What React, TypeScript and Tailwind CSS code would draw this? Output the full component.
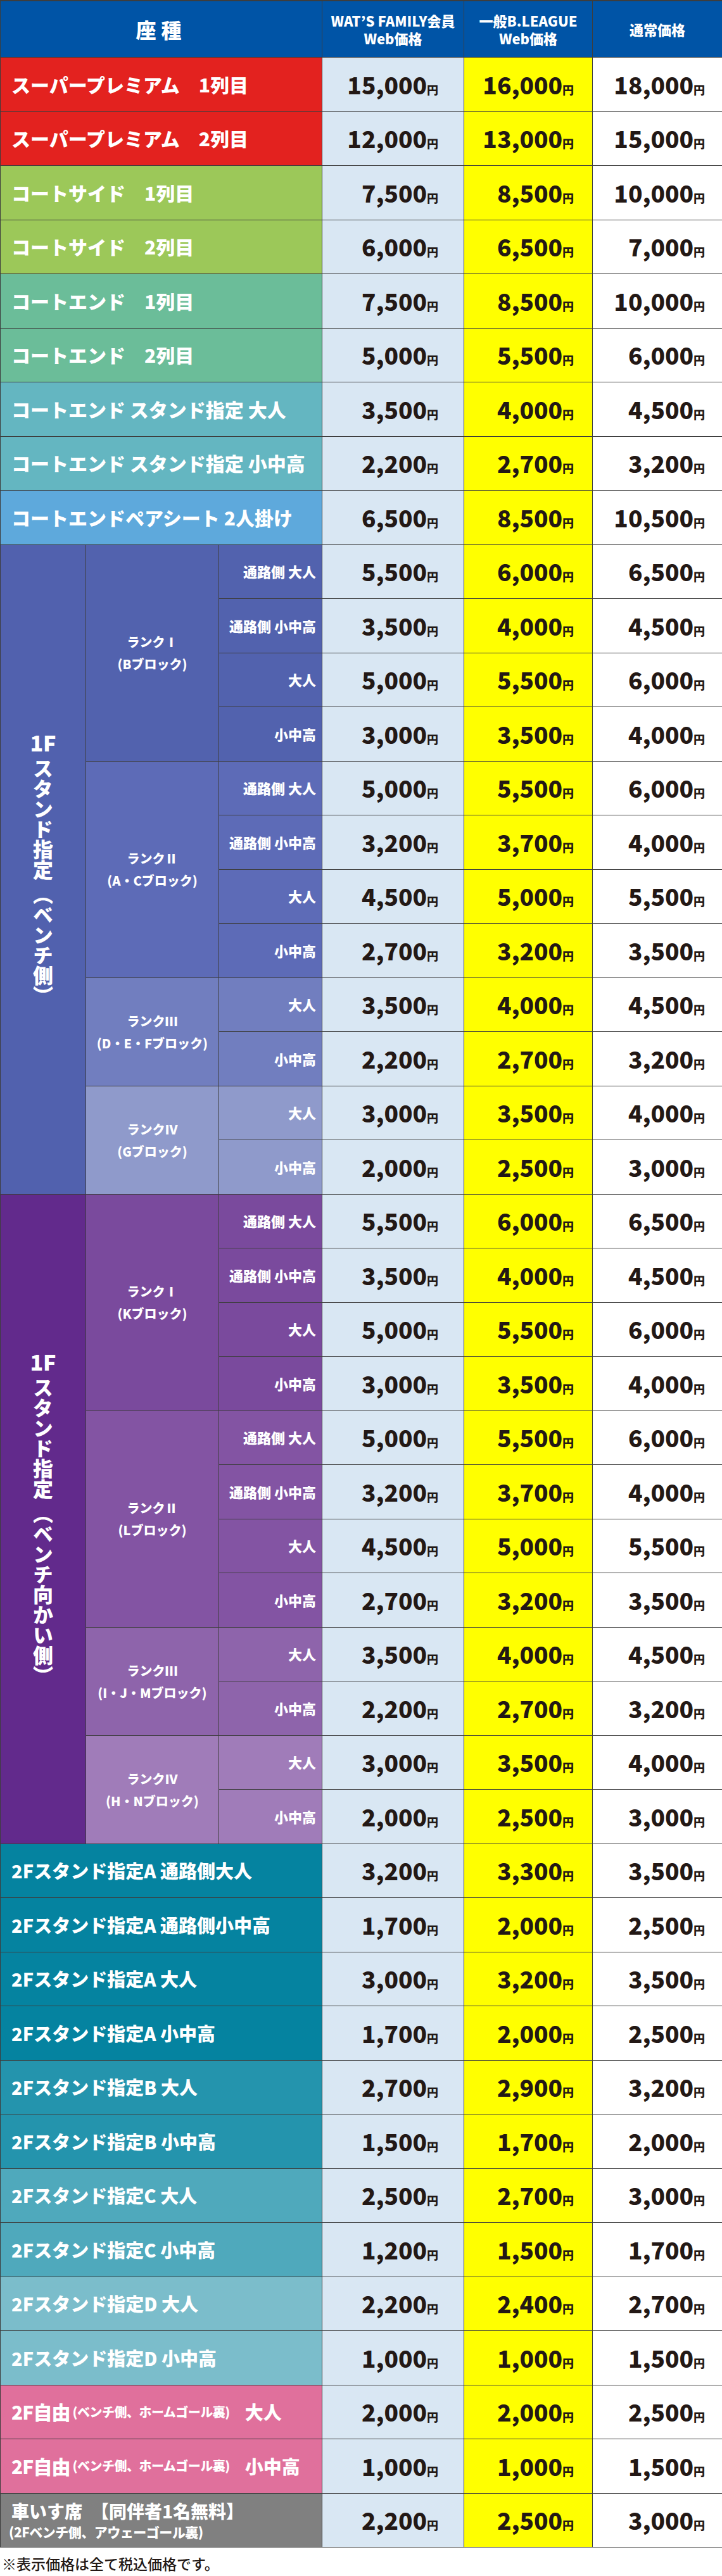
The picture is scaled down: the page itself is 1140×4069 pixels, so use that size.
import React from 'react'

const FONT = "font-['Noto_Sans_CJK_JP','Noto_Sans_CJK_SC',sans-serif]"
const LINE = 'border-[#3d3d3d]'

type Prices = [string, string, string]

function Price({ v }: { v: string }) {
  return (
    <span className="flex items-baseline text-[#231815]">
      <span className="text-[37px] font-black leading-none">{v}</span>
      <span className="text-[18px] font-black leading-none">円</span>
    </span>
  )
}

function PriceCells({ p }: { p: Prices }) {
  return (
    <>
      <div className={`w-[224px] h-full flex items-center justify-end pr-[40px] bg-[#d9e7f3] border-r border-b ${LINE}`}>
        <Price v={p[0]} />
      </div>
      <div className={`w-[203px] h-full flex items-center justify-end pr-[29px] bg-[#ffff00] border-r border-b ${LINE}`}>
        <Price v={p[1]} />
      </div>
      <div className={`w-[204px] h-full flex items-center justify-end pr-[27px] bg-white border-b ${LINE}`}>
        <Price v={p[2]} />
      </div>
    </>
  )
}

const topRows: { label: string; bg: string; p: Prices }[] = [
  { label: 'スーパープレミアム　1列目', bg: 'bg-[#e3221f]', p: ['15,000', '16,000', '18,000'] },
  { label: 'スーパープレミアム　2列目', bg: 'bg-[#e3221f]', p: ['12,000', '13,000', '15,000'] },
  { label: 'コートサイド　1列目', bg: 'bg-[#9cc859]', p: ['7,500', '8,500', '10,000'] },
  { label: 'コートサイド　2列目', bg: 'bg-[#9cc859]', p: ['6,000', '6,500', '7,000'] },
  { label: 'コートエンド　1列目', bg: 'bg-[#6bbd99]', p: ['7,500', '8,500', '10,000'] },
  { label: 'コートエンド　2列目', bg: 'bg-[#6bbd99]', p: ['5,000', '5,500', '6,000'] },
  { label: 'コートエンド スタンド指定 大人', bg: 'bg-[#64b6c1]', p: ['3,500', '4,000', '4,500'] },
  { label: 'コートエンド スタンド指定 小中高', bg: 'bg-[#64b6c1]', p: ['2,200', '2,700', '3,200'] },
  { label: 'コートエンドペアシート 2人掛け', bg: 'bg-[#5ea9dc]', p: ['6,500', '8,500', '10,500'] },
]

type Rank = { name: string; block: string; bg: string; rows: { label: string; p: Prices }[] }

const fullRows = (a: Prices[]) => [
  { label: '通路側 大人', p: a[0] },
  { label: '通路側 小中高', p: a[1] },
  { label: '大人', p: a[2] },
  { label: '小中高', p: a[3] },
]
const halfRows = (a: Prices[]) => [
  { label: '大人', p: a[0] },
  { label: '小中高', p: a[1] },
]

const r1: Prices[] = [['5,500', '6,000', '6,500'], ['3,500', '4,000', '4,500'], ['5,000', '5,500', '6,000'], ['3,000', '3,500', '4,000']]
const r2: Prices[] = [['5,000', '5,500', '6,000'], ['3,200', '3,700', '4,000'], ['4,500', '5,000', '5,500'], ['2,700', '3,200', '3,500']]
const r3: Prices[] = [['3,500', '4,000', '4,500'], ['2,200', '2,700', '3,200']]
const r4: Prices[] = [['3,000', '3,500', '4,000'], ['2,000', '2,500', '3,000']]

const benchSide: Rank[] = [
  { name: 'ランクⅠ', block: '(Bブロック)', bg: 'bg-[#5262ae]', rows: fullRows(r1) },
  { name: 'ランクⅡ', block: '(A・Cブロック)', bg: 'bg-[#5d6bb7]', rows: fullRows(r2) },
  { name: 'ランクⅢ', block: '(D・E・Fブロック)', bg: 'bg-[#717ebf]', rows: halfRows(r3) },
  { name: 'ランクⅣ', block: '(Gブロック)', bg: 'bg-[#8f9acb]', rows: halfRows(r4) },
]

const oppositeSide: Rank[] = [
  { name: 'ランクⅠ', block: '(Kブロック)', bg: 'bg-[#7a4a9d]', rows: fullRows(r1) },
  { name: 'ランクⅡ', block: '(Lブロック)', bg: 'bg-[#8354a3]', rows: fullRows(r2) },
  { name: 'ランクⅢ', block: '(I・J・Mブロック)', bg: 'bg-[#8e64ab]', rows: halfRows(r3) },
  { name: 'ランクⅣ', block: '(H・Nブロック)', bg: 'bg-[#a07cb9]', rows: halfRows(r4) },
]

const secondFloor: { label: string; bg: string; p: Prices }[] = [
  { label: '2Fスタンド指定A 通路側大人', bg: 'bg-[#0583a0]', p: ['3,200', '3,300', '3,500'] },
  { label: '2Fスタンド指定A 通路側小中高', bg: 'bg-[#0583a0]', p: ['1,700', '2,000', '2,500'] },
  { label: '2Fスタンド指定A 大人', bg: 'bg-[#0583a0]', p: ['3,000', '3,200', '3,500'] },
  { label: '2Fスタンド指定A 小中高', bg: 'bg-[#0583a0]', p: ['1,700', '2,000', '2,500'] },
  { label: '2Fスタンド指定B 大人', bg: 'bg-[#2494ad]', p: ['2,700', '2,900', '3,200'] },
  { label: '2Fスタンド指定B 小中高', bg: 'bg-[#2494ad]', p: ['1,500', '1,700', '2,000'] },
  { label: '2Fスタンド指定C 大人', bg: 'bg-[#4fa9bc]', p: ['2,500', '2,700', '3,000'] },
  { label: '2Fスタンド指定C 小中高', bg: 'bg-[#4fa9bc]', p: ['1,200', '1,500', '1,700'] },
  { label: '2Fスタンド指定D 大人', bg: 'bg-[#7bbdcb]', p: ['2,200', '2,400', '2,700'] },
  { label: '2Fスタンド指定D 小中高', bg: 'bg-[#7bbdcb]', p: ['1,000', '1,000', '1,500'] },
]

function StandGroup({ outerBg, side, ranks }: { outerBg: string; side: string; ranks: Rank[] }) {
  return (
    <div className="flex">
      <div className={`w-[135px] shrink-0 flex flex-col items-center justify-center text-white border-r border-b ${LINE} ${outerBg}`}>
        <div className="text-[34px] font-black leading-none">1F</div>
        <div className="text-[32px] font-black leading-none mt-[8px] [writing-mode:vertical-rl]">{`スタンド指定 （${side}）`}</div>
      </div>
      <div className="flex flex-col">
        {ranks.map((rank) => (
          <div key={rank.name + rank.block} className="flex">
            <div className={`w-[210px] shrink-0 flex flex-col items-center justify-center text-white text-[20px] font-black leading-[35px] border-r border-b ${LINE} ${rank.bg}`}>
              <div>{rank.name}</div>
              <div>{rank.block}</div>
            </div>
            <div className="flex flex-col">
              {rank.rows.map((row) => (
                <div key={row.label} className="flex h-[85.5px]">
                  <div className={`w-[163px] h-full flex items-center justify-end pr-[9px] text-white text-[22px] font-black border-r border-b ${LINE} ${rank.bg}`}>
                    {row.label}
                  </div>
                  <PriceCells p={row.p} />
                </div>
              ))}
            </div>
          </div>
        ))}
      </div>
    </div>
  )
}

export default function App() {
  return (
    <div className={`w-[1140px] h-[4069px] bg-white overflow-hidden ${FONT}`}>
      <div className={`w-[1140px] border-t-2 border-l ${LINE}`}>
        {/* header */}
        <div className="flex h-[89px] bg-[#0054a6] text-white font-black">
          <div className={`w-[508px] flex items-center justify-center text-[32px] tracking-[8px] border-r border-b ${LINE}`}>座種</div>
          <div className={`w-[224px] flex flex-col items-center justify-center text-[22px] leading-[28px] border-r border-b ${LINE}`}>
            <div>WAT’S FAMILY会員</div>
            <div>Web価格</div>
          </div>
          <div className={`w-[203px] flex flex-col items-center justify-center text-[22px] leading-[28px] border-r border-b ${LINE}`}>
            <div>一般B.LEAGUE</div>
            <div>Web価格</div>
          </div>
          <div className={`w-[204px] flex items-center justify-center text-[22px] border-b ${LINE}`}>通常価格</div>
        </div>

        {topRows.map((row) => (
          <div key={row.label} className="flex h-[85.5px]">
            <div className={`w-[508px] h-full flex items-center pl-[17px] text-white text-[30px] font-black whitespace-pre border-r border-b ${LINE} ${row.bg}`}>
              {row.label}
            </div>
            <PriceCells p={row.p} />
          </div>
        ))}

        <StandGroup outerBg="bg-[#5161ae]" side="ベンチ側" ranks={benchSide} />
        <StandGroup outerBg="bg-[#622a8c]" side="ベンチ向かい側" ranks={oppositeSide} />

        {secondFloor.map((row) => (
          <div key={row.label} className="flex h-[85.5px]">
            <div className={`w-[508px] h-full flex items-center pl-[17px] text-white text-[29px] font-black whitespace-pre border-r border-b ${LINE} ${row.bg}`}>
              {row.label}
            </div>
            <PriceCells p={row.p} />
          </div>
        ))}

        {[
          { label: '大人', p: ['2,000', '2,000', '2,500'] as Prices },
          { label: '小中高', p: ['1,000', '1,000', '1,500'] as Prices },
        ].map((row) => (
          <div key={row.label} className="flex h-[85.5px]">
            <div className={`w-[508px] h-full flex items-center pl-[17px] text-white font-black whitespace-nowrap border-r border-b ${LINE} bg-[#e0709c]`}>
              <span className="text-[30px] tracking-[-1px]">2F自由</span>
              <span className="text-[20px] tracking-[-0.5px] ml-[4px]">(ベンチ側、ホームゴール裏)</span>
              <span className="text-[29px] ml-[24px]">{row.label}</span>
            </div>
            <PriceCells p={row.p} />
          </div>
        ))}

        <div className="flex h-[85.5px]">
          <div className={`w-[508px] h-full flex flex-col justify-center pl-[13px] text-white font-black whitespace-nowrap border-r border-b ${LINE} bg-[#808080]`}>
            <div className="text-[28px] leading-[36px] pl-[4px]">車いす席　【同伴者1名無料】</div>
            <div className="text-[21px] leading-[30px] tracking-[-0.5px]">(2Fベンチ側、アウェーゴール裏)</div>
          </div>
          <PriceCells p={['2,200', '2,500', '3,000']} />
        </div>
      </div>

      <div className="pl-[3px] pt-[14px] text-[23px] font-medium leading-none text-[#231815]">
        ※表示価格は全て税込価格です。
      </div>
    </div>
  )
}
